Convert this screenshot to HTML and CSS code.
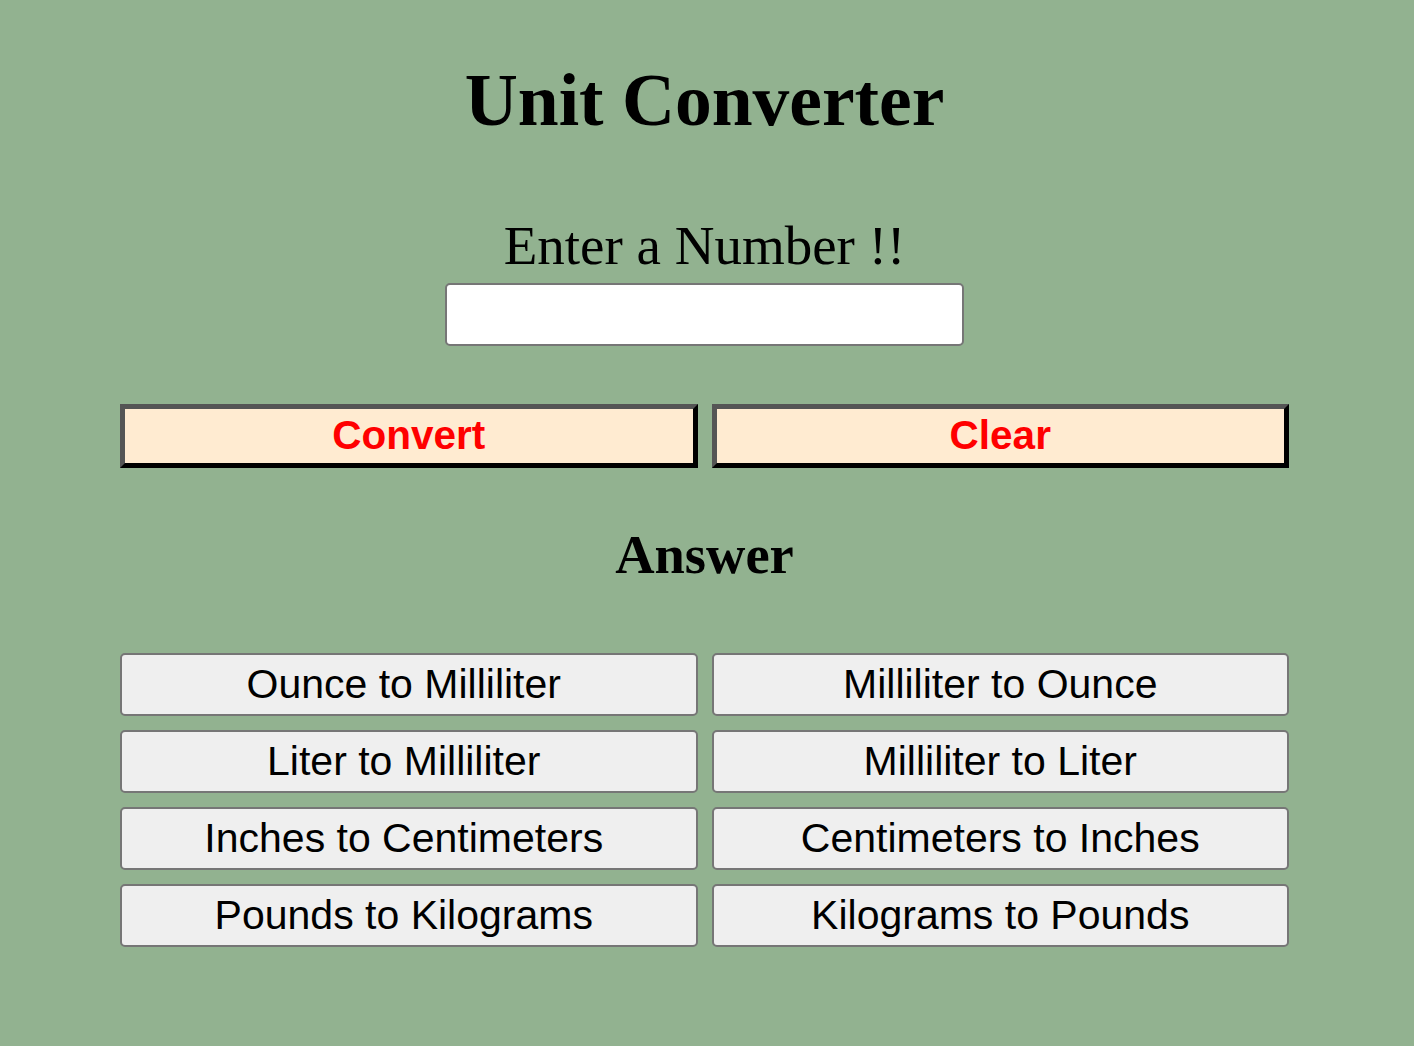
FILE: index.html
```html
<!DOCTYPE html>
<html lang="en">
<head>
<meta charset="utf-8">
<title>Unit Converter</title>
<link rel="stylesheet" href="styles.css">
</head>
<body>
<main class="app">
  <h1 class="title">Unit Converter</h1>
  <label class="prompt" for="num">Enter a Number !!</label>
  <input class="number-input" id="num" type="text">
  <div class="actions">
    <button class="action-btn">Convert</button>
    <button class="action-btn">Clear</button>
  </div>
  <h2 class="answer">Answer</h2>
  <div class="conversions">
    <button class="conv-btn">Ounce to Milliliter</button>
    <button class="conv-btn">Milliliter to Ounce</button>
    <button class="conv-btn">Liter to Milliliter</button>
    <button class="conv-btn">Milliliter to Liter</button>
    <button class="conv-btn">Inches to Centimeters</button>
    <button class="conv-btn">Centimeters to Inches</button>
    <button class="conv-btn">Pounds to Kilograms</button>
    <button class="conv-btn">Kilograms to Pounds</button>
  </div>
</main>
</body>
</html>
```

FILE: styles.css
```css
html, body {
  margin: 0;
  padding: 0;
}

body {
  background: #92b290;
  min-height: 1046px;
  padding-right: 5px;
  box-sizing: border-box;
}

.app {
  width: 1169px;
  margin: 0 auto;
  padding-top: 64px;
  display: flex;
  flex-direction: column;
  align-items: center;
}

.title {
  margin: 0;
  font-family: "Liberation Serif", "Times New Roman", serif;
  font-weight: bold;
  font-size: 73.5px;
  line-height: 73px;
  color: #000;
}

.prompt {
  margin-top: 82px;
  font-family: "Liberation Serif", "Times New Roman", serif;
  font-size: 55px;
  line-height: 54.5px;
  color: #000;
}

.number-input {
  margin-top: 9px;
  width: 519px;
  height: 63px;
  box-sizing: border-box;
  border: 2px solid #767676;
  border-radius: 5px;
  background: #fff;
  font-size: 30px;
  padding: 0 8px;
}

.actions {
  margin-top: 58px;
  width: 100%;
  display: grid;
  grid-template-columns: 1fr 1fr;
  column-gap: 14px;
}

.action-btn {
  height: 64px;
  box-sizing: border-box;
  border: 5px solid;
  border-color: #555 #000 #000 #555;
  border-radius: 0;
  background: #ffebd1;
  color: #ff0000;
  font-family: "Liberation Sans", Arial, sans-serif;
  font-weight: bold;
  font-size: 40.5px;
  line-height: 1;
  padding: 0;
}

.answer {
  margin: 60px 0 0;
  font-family: "Liberation Serif", "Times New Roman", serif;
  font-weight: bold;
  font-size: 54.5px;
  line-height: 54px;
  color: #000;
}

.conversions {
  margin-top: 71px;
  width: 100%;
  display: grid;
  grid-template-columns: 1fr 1fr;
  gap: 14px;
}

.conv-btn {
  height: 63px;
  box-sizing: border-box;
  border: 2px solid #767676;
  border-radius: 5px;
  background: #efefef;
  color: #000;
  font-family: "Liberation Sans", Arial, sans-serif;
  font-size: 41px;
  line-height: 1;
  padding: 0;
}

.conv-btn:nth-child(odd) {
  padding-right: 10px;
}
```
